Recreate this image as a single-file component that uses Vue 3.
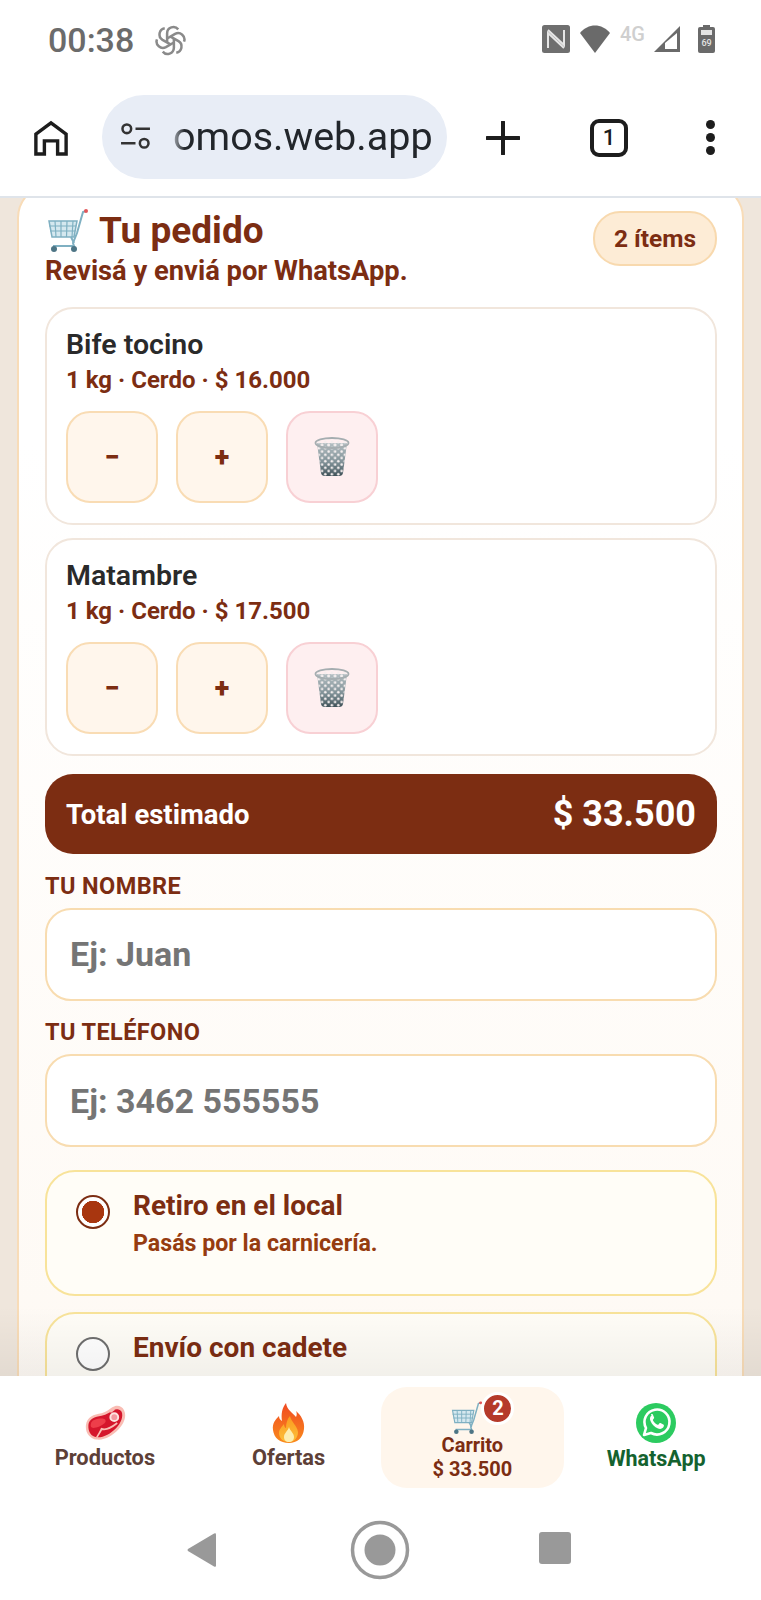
<template>
  <div class="phone">
    <!-- status bar -->
    <div class="statusBar">
      <div class="statusLeft">
        <span class="clock">00:38</span>
        <svg class="gptIcon" viewBox="0 0 32 32" fill="none" stroke="#8a8a8a" stroke-width="2.600">
          <path v-for="a in [0, 60, 120, 180, 240, 300]" :key="a" d="M12.500 18V8.500A6.500 6.500 0 0 1 24 4.500" :transform="`rotate(${a} 16 16)`" />
        </svg>
      </div>
      <div class="statusRight">
        <svg class="nfc" viewBox="0 0 28 28">
          <rect x="0" y="0" width="28" height="28" rx="2.500" fill="#6f6f6f" />
          <path d="M6 23V8l16 15M22 5v15L6 5" fill="none" stroke="#e6e6e6" stroke-width="2" />
        </svg>
        <svg class="wifi" viewBox="0 0 30 28"><path d="M0 8C8-2 22-2 30 8L15 28z" fill="#6a6a6a" /></svg>
        <span class="netType">4G</span>
        <svg class="signal" viewBox="0 0 26 26">
          <path d="M26 0v26H0z" fill="#6a6a6a" />
          <path d="M23 7v16H11v-6z" fill="#fff" />
        </svg>
        <svg class="battery" viewBox="0 0 17 28">
          <rect x="5" y="0" width="7" height="3" fill="#6a6a6a" />
          <rect x="0" y="2" width="17" height="26" rx="2" fill="#6a6a6a" />
          <rect x="3" y="5" width="11" height="5" fill="#e4e4e4" />
          <text x="8.500" y="21" font-size="9" font-weight="500" text-anchor="middle" fill="#e4e4e4">69</text>
        </svg>
      </div>
    </div>

    <!-- browser toolbar -->
    <div class="toolbar">
      <svg class="homeIcon" viewBox="0 0 36 38" fill="none" stroke="#1d1d1d" stroke-width="3.600">
        <path d="M2 36V15L18 3l16 12v21h-9V22H11v14z" />
      </svg>
      <div class="urlPill">
        <svg class="tuneIcon" viewBox="0 0 32 28" fill="none" stroke="#333" stroke-width="2.600">
          <circle cx="7" cy="6" r="4.500" />
          <path d="M16 6h15M1 21h15" />
          <circle cx="25" cy="21" r="4.500" />
        </svg>
        <span class="urlText">omos.web.app</span>
      </div>
      <svg class="plusIcon" viewBox="0 0 34 34"><path d="M17 1v32M1 17h32" stroke="#1d1d1d" stroke-width="4" stroke-linecap="round" /></svg>
      <div class="tabCount">1</div>
      <div class="moreDots"><i></i><i></i><i></i></div>
    </div>

    <!-- page -->
    <div class="content">
      <div class="orderCard">
        <div class="orderHead">
          <div>
            <h1 class="orderTitle">
              <svg class="cartBig" viewBox="0 0 42 44"><use href="#cart" /></svg>
              Tu pedido
            </h1>
            <p class="orderSub">Revisá y enviá por WhatsApp.</p>
          </div>
          <span class="itemsPill">2 ítems</span>
        </div>

        <div v-for="item in items" :key="item.name" class="itemCard">
          <div class="itemName">{{ item.name }}</div>
          <div class="itemMeta">{{ item.meta }}</div>
          <div class="itemBtns">
            <button class="qtyBtn">−</button>
            <button class="qtyBtn">+</button>
            <button class="qtyBtn trashBtn">
              <svg class="trashIcon" viewBox="0 0 36 40">
                <defs>
                  <linearGradient :id="'bin' + item.id" x1="0" y1="0" x2="0" y2="1">
                    <stop offset="0" stop-color="#b5bfc3" />
                    <stop offset="0.6" stop-color="#7e8f95" />
                    <stop offset="1" stop-color="#3f5158" />
                  </linearGradient>
                  <pattern :id="'holes' + item.id" width="6.500" height="6.500" patternUnits="userSpaceOnUse">
                    <circle cx="1.600" cy="1.600" r="1.300" fill="#f4eeee" />
                    <circle cx="4.850" cy="4.850" r="1.300" fill="#f4eeee" />
                  </pattern>
                </defs>
                <path d="M3 6l4 30q.5 3 4 3h14q3.500 0 4-3l4-30z" :fill="`url(#bin${item.id})`" />
                <path d="M3 6l4 30q.5 3 4 3h14q3.500 0 4-3l4-30z" :fill="`url(#holes${item.id})`" />
                <ellipse cx="18" cy="6" rx="16.500" ry="5" :fill="`url(#holes${item.id})`" stroke="#a5adb0" stroke-width="1.800" />
              </svg>
            </button>
          </div>
        </div>

        <div class="totalBar">
          <span class="totalLabel">Total estimado</span>
          <span class="totalValue">$ 33.500</span>
        </div>

        <label class="fieldLabel">TU NOMBRE</label>
        <input class="fieldInput" placeholder="Ej: Juan" />
        <label class="fieldLabel">TU TELÉFONO</label>
        <input class="fieldInput" placeholder="Ej: 3462 555555" />

        <div class="optCard">
          <span class="radio checked"></span>
          <div>
            <div class="optTitle">Retiro en el local</div>
            <div class="optSub">Pasás por la carnicería.</div>
          </div>
        </div>
        <div class="optCard">
          <span class="radio"></span>
          <div>
            <div class="optTitle">Envío con cadete</div>
          </div>
        </div>
      </div>
      <div class="fade"></div>
    </div>

    <!-- bottom nav -->
    <nav class="bottomNav">
      <div class="navTab">
        <svg class="navIcon" viewBox="0 -1 43 38">
          <path d="M2 20C3 12 10 9 18 8C23 7 26 4 29 2C33-1 39 0 41 5C44 11 41 19 35 25C29 31 21 36 13 35C6 34 1 28 2 20z" fill="#f9bdb4" />
          <path d="M4.500 20C5 14 11 11.500 18 10.500C23 9.500 27 7 30 5C33 3 37 3.500 38.500 6.500C40.500 11 38 18 33 23C27 29 20 33 13 32.500C7.500 32 4 27 4.500 20z" fill="#d5162c" />
          <path d="M7 19C8 15 12 14 16 13.500C20 13 23 14 22 17C20 20.500 13 23 9.500 23C7 23 6.500 21 7 19z" fill="#ee3e4a" />
          <path d="M13 33C15 29 17 27 18 24C23 26 29 22 34 18" fill="none" stroke="#f9bdb4" stroke-width="1.800" />
          <path d="M27 7l4-3" stroke="#f9bdb4" stroke-width="1.800" />
          <circle cx="31" cy="12" r="4" fill="#f39aa0" stroke="#fde4df" stroke-width="2" />
        </svg>
        <span class="navLabel">Productos</span>
      </div>
      <div class="navTab">
        <svg class="navIcon" viewBox="0 0 36 40">
          <defs>
            <linearGradient id="flame" x1="0" y1="0" x2="0" y2="1">
              <stop offset="0" stop-color="#f04a23" />
              <stop offset="1" stop-color="#f98a1c" />
            </linearGradient>
            <linearGradient id="flameMid" x1="0" y1="0" x2="0" y2="1">
              <stop offset="0" stop-color="#fa9a1f" />
              <stop offset="1" stop-color="#fdc03a" />
            </linearGradient>
          </defs>
          <path d="M15 0C16 7 21 9 25 14C26 12 26 10 25 8C30 12 34 19 33 26C32 35 26 40 18 40C9 40 3 35 2 27C1 20 5 16 8 13C8 15 9 17 11 18C10 11 11 5 15 0z" fill="url(#flame)" />
          <path d="M19 13C20 19 26 22 27 29C27 35 23 39 18 39C12 39 8 35 8 30C8 26 11 24 13 21C13 23 14 25 15 25C15 21 16 16 19 13z" fill="url(#flameMid)" />
          <path d="M18 24C19 28 23 30 23 34C23 37 21 39 18 39C15 39 13 37 13 34C13 30 17 28 18 24z" fill="#fdeeb0" />
        </svg>
        <span class="navLabel">Ofertas</span>
      </div>
      <div class="navTab active">
        <div class="cartWrap">
          <svg class="cartNav" viewBox="0 0 42 44"><use href="#cart" /></svg>
          <span class="cartBadge">2</span>
        </div>
        <span class="navLabel cartLabel">Carrito</span>
        <span class="navLabel cartLabel">$ 33.500</span>
      </div>
      <div class="navTab">
        <svg class="navIcon" viewBox="0 0 40 40">
          <circle cx="20" cy="20" r="20" fill="#2ccb60" />
          <path d="M8 32l2-7a12.500 12.500 0 1 1 5 5z" fill="none" stroke="#fff" stroke-width="2.600" stroke-linejoin="round" />
          <path d="M15.500 12.500c-1.500 1-2 3-1 5.500 1.500 3.500 4 6 7.500 7.500 2.500 1 4.500 0 5.500-1.500.5-1 .5-2 .2-2.300l-3.200-1.700c-.5-.2-.8 0-1 .3l-1 1.300c-.3.300-.6.300-1 .1-2-.9-3.500-2.400-4.500-4.300-.2-.4-.1-.7.1-1l.9-1.100c.2-.3.2-.6.100-.9l-1.400-3.100c-.3-.5-1.200-.4-1.700-.3z" fill="#fff" />
        </svg>
        <span class="navLabel waLabel">WhatsApp</span>
      </div>
    </nav>

    <!-- android buttons -->
    <div class="systemNav">
      <svg class="sysBack" viewBox="0 0 30 36"><path d="M30 2v32q0 2-2 1L1 19q-1-1 0-2L28 1q2-1 2 1z" fill="#999" /></svg>
      <svg class="sysHome" viewBox="0 0 60 60">
        <circle cx="30" cy="30" r="27.500" fill="none" stroke="#999" stroke-width="3.500" />
        <circle cx="30" cy="30" r="15.500" fill="#999" />
      </svg>
      <div class="sysRecent"></div>
    </div>

    <!-- shared cart drawing -->
    <svg width="0" height="0" class="defsHolder">
      <defs>
        <symbol id="cart" viewBox="0 0 42 44">
          <g fill="none" stroke="#7fb0c2" stroke-width="1.500">
            <path d="M2 12h28l-3 16H5z" fill="#d5e8ef" />
            <path d="M2 17h27M3 22h25M8 12l1 16M14 12v16M20 12l-.5 16M26 12l-1 16" stroke-width="1.200" />
            <path d="M39 2l-3 1-6 21-4 10 1 3H6" stroke-width="2" />
            <path d="M24 28l3 6" stroke-width="2" />
          </g>
          <circle cx="39" cy="2" r="2" fill="#e2575a" />
          <circle cx="7" cy="40" r="3" fill="#4d7585" />
          <circle cx="27" cy="40" r="3" fill="#4d7585" />
        </symbol>
      </defs>
    </svg>
  </div>
</template>

<script setup>
const items = [
  { id: 1, name: "Bife tocino", meta: "1 kg · Cerdo · $ 16.000" },
  { id: 2, name: "Matambre", meta: "1 kg · Cerdo · $ 17.500" },
];
</script>

<style>
html,
body {
  margin: 0;
  background: #fff;
}
</style>

<style scoped>
.phone {
  width: 761px;
  height: 1600px;
  overflow: hidden;
  display: flex;
  flex-direction: column;
  font-family: Roboto, "Liberation Sans", sans-serif;
  background: #fff;
}

.statusBar {
  height: 85px;
  flex: none;
  display: flex;
  justify-content: space-between;
  align-items: flex-start;
  padding: 22px 46px 0 48px;
  box-sizing: border-box;
}
.statusLeft {
  display: flex;
  align-items: center;
  gap: 21px;
}
.clock {
  font-size: 34px;
  line-height: 36px;
  font-weight: 500;
  color: #6b6b6b;
}
.gptIcon {
  width: 31px;
  height: 31px;
}
.statusRight {
  display: flex;
  align-items: flex-start;
  margin-top: 3px;
}
.nfc {
  width: 28px;
  height: 28px;
}
.wifi {
  width: 30px;
  height: 28px;
  margin-left: 10px;
}
.netType {
  width: 30px;
  margin-left: 10px;
  font-size: 20px;
  line-height: 18px;
  font-weight: 500;
  color: #cfcfcf;
}
.signal {
  width: 26px;
  height: 26px;
  margin: 1px 0 0 4px;
}
.battery {
  width: 17px;
  height: 28px;
  margin-left: 18px;
}

.toolbar {
  height: 111px;
  flex: none;
  box-sizing: border-box;
  display: flex;
  align-items: center;
  padding: 0 0 6px 34px;
}
.homeIcon {
  width: 34px;
  height: 38px;
  flex: none;
}
.urlPill {
  width: 345px;
  height: 84px;
  margin: -2px 0 0 34px;
  flex: none;
  border-radius: 42px;
  background: #e8edf6;
  display: flex;
  align-items: center;
  padding-left: 18px;
  box-sizing: border-box;
  overflow: hidden;
}
.tuneIcon {
  width: 31px;
  height: 27px;
  flex: none;
}
.urlText {
  margin-left: 22px;
  font-size: 39.500px;
  color: #22262b;
  white-space: nowrap;
  -webkit-mask-image: linear-gradient(to right, rgba(0, 0, 0, 0.35), #000 12px);
  mask-image: linear-gradient(to right, rgba(0, 0, 0, 0.35), #000 12px);
}
.plusIcon {
  width: 34px;
  height: 34px;
  margin-left: 39px;
  flex: none;
}
.tabCount {
  width: 38px;
  height: 38px;
  margin-left: 70px;
  box-sizing: border-box;
  border: 4px solid #1d1d1d;
  border-radius: 9px;
  font-size: 22px;
  font-weight: 500;
  line-height: 30px;
  text-align: center;
  color: #1d1d1d;
  flex: none;
}
.moreDots {
  margin-left: 78px;
  display: flex;
  flex-direction: column;
  gap: 4px;
}
.moreDots i {
  display: block;
  width: 9px;
  height: 9px;
  border-radius: 50%;
  background: #1d1d1d;
}

.content {
  height: 1180px;
  flex: none;
  position: relative;
  overflow: hidden;
  background: #efe6dc;
  border-top: 2px solid #dfe4ea;
  box-sizing: border-box;
  padding: 0 17px;
}
.orderCard {
  margin-top: -14px;
  box-sizing: border-box;
  padding: 23px 25px 30px 26px;
  border: 2px solid #f8dcb8;
  border-radius: 34px;
  background: linear-gradient(#fff, #fff 20%, #fef9f3);
}
.orderHead {
  display: flex;
  justify-content: space-between;
  align-items: flex-start;
  margin-bottom: 21px;
}
.orderTitle {
  margin: 0;
  display: flex;
  align-items: center;
  gap: 10px;
  font-size: 37px;
  line-height: 42px;
  font-weight: 700;
  color: #7c2d12;
}
.cartBig {
  width: 42px;
  height: 44px;
  margin-left: 2px;
}
.orderSub {
  margin: 3px 0 0;
  font-size: 27.300px;
  line-height: 30px;
  font-weight: 700;
  color: #7c2d12;
}
.itemsPill {
  margin-top: 2px;
  width: 124px;
  height: 55px;
  box-sizing: border-box;
  border: 2px solid #f8d9ae;
  border-radius: 27px;
  background: #fdecd6;
  font-size: 24.500px;
  font-weight: 700;
  line-height: 51px;
  text-align: center;
  color: #7c2d12;
}

.itemCard {
  height: 218px;
  box-sizing: border-box;
  padding: 19px 19px 0;
  margin-bottom: 13px;
  border: 2px solid #f1e6dc;
  border-radius: 28px;
  background: #fff;
}
.itemName {
  font-size: 28.500px;
  line-height: 34px;
  font-weight: 600;
  color: #2a2a2a;
}
.itemMeta {
  margin-top: 2px;
  font-size: 24px;
  line-height: 32px;
  font-weight: 700;
  color: #7c2d12;
}
.itemBtns {
  display: flex;
  gap: 18px;
  margin-top: 15px;
}
.qtyBtn {
  width: 92px;
  height: 92px;
  padding: 0;
  box-sizing: border-box;
  border: 2px solid #f9dcb4;
  border-radius: 24px;
  background: #fff6ec;
  font-family: inherit;
  font-size: 27px;
  font-weight: 900;
  color: #7c2d12;
  display: flex;
  align-items: center;
  justify-content: center;
}
.trashBtn {
  border-color: #f8d0d4;
  background: #feeff0;
}
.trashIcon {
  width: 36px;
  height: 40px;
}

.totalBar {
  height: 80px;
  margin-top: 18px;
  padding: 0 21px;
  border-radius: 28px;
  background: #7c2d12;
  color: #fff;
  display: flex;
  align-items: center;
  justify-content: space-between;
  font-weight: 700;
}
.totalLabel {
  font-size: 27.500px;
}
.totalValue {
  font-size: 36px;
}

.fieldLabel {
  display: block;
  margin: 18.500px 0 8px;
  font-size: 23.500px;
  line-height: 27px;
  font-weight: 700;
  letter-spacing: 0.4px;
  color: #7c2d12;
}
.fieldInput {
  display: block;
  width: 100%;
  height: 93px;
  box-sizing: border-box;
  padding: 0 23px;
  border: 2px solid #f8dcb0;
  border-radius: 26px;
  background: #fff;
  font-family: inherit;
  font-size: 34px;
  font-weight: 700;
  outline: none;
}
.fieldInput::placeholder {
  color: #757575;
  opacity: 1;
}

.optCard {
  height: 126px;
  box-sizing: border-box;
  margin-top: 16px;
  padding: 16px 29px;
  display: flex;
  gap: 23px;
  border: 2px solid #f8e39a;
  border-radius: 30px;
  background: #fffdf7;
}
.fieldInput + .optCard {
  margin-top: 23px;
}
.radio {
  width: 34px;
  height: 34px;
  margin-top: 7px;
  box-sizing: border-box;
  flex: none;
  border: 2px solid #6f6f6f;
  border-radius: 50%;
  background: #fff;
}
.radio.checked {
  border-color: #7c2d12;
  background: radial-gradient(circle, #a8360f 0 11px, #fff 11.500px);
}
.optTitle {
  font-size: 28px;
  line-height: 36px;
  font-weight: 700;
  color: #7c2d12;
}
.optSub {
  margin-top: 4px;
  font-size: 23.200px;
  line-height: 30px;
  font-weight: 700;
  color: #963c10;
}
.fade {
  position: absolute;
  left: 0;
  right: 0;
  bottom: 0;
  height: 70px;
  background: linear-gradient(rgba(0, 0, 0, 0), rgba(0, 0, 0, 0.05));
}

.bottomNav {
  height: 114px;
  flex: none;
  box-sizing: border-box;
  padding: 11px 15px 0;
  display: grid;
  grid-template-columns: repeat(4, 1fr);
  column-gap: 4px;
  background: #fff;
}
.navTab {
  height: 101px;
  display: flex;
  flex-direction: column;
  align-items: center;
  padding-top: 16px;
  box-sizing: border-box;
}
.navTab.active {
  margin: 0 -1.500px;
  padding-top: 14px;
  border-radius: 26px;
  background: #fff6ec;
}
.navIcon {
  height: 40px;
  width: 42px;
}
.navLabel {
  margin-top: 1px;
  font-size: 21.800px;
  line-height: 28px;
  font-weight: 700;
  color: #5d4037;
}
.cartWrap {
  position: relative;
  height: 32px;
  margin-right: 10px;
}
.cartNav {
  display: block;
  width: 32px;
  height: 34px;
}
.cartBadge {
  position: absolute;
  left: 30px;
  top: -9px;
  width: 27px;
  height: 27px;
  border-radius: 50%;
  border: 3px solid #fff;
  background: #b53a2a;
  color: #fff;
  font-size: 20px;
  font-weight: 700;
  line-height: 27px;
  text-align: center;
}
.cartLabel {
  margin-top: 0;
  font-size: 20px;
  line-height: 24px;
  color: #7c2d12;
}
.waLabel {
  font-size: 21.500px;
  color: #14622f;
  margin-top: 2px;
}

.systemNav {
  height: 110px;
  flex: none;
  display: flex;
  align-items: flex-start;
  padding: 42px 0 0 187px;
  box-sizing: border-box;
  background: #fff;
}
.sysBack {
  width: 29px;
  height: 36px;
}
.sysHome {
  width: 60px;
  height: 60px;
  margin: -12px 0 0 134px;
}
.sysRecent {
  width: 32px;
  height: 32px;
  margin: 0 0 0 129px;
  border-radius: 3px;
  background: #999;
}
.defsHolder {
  position: absolute;
}
</style>
